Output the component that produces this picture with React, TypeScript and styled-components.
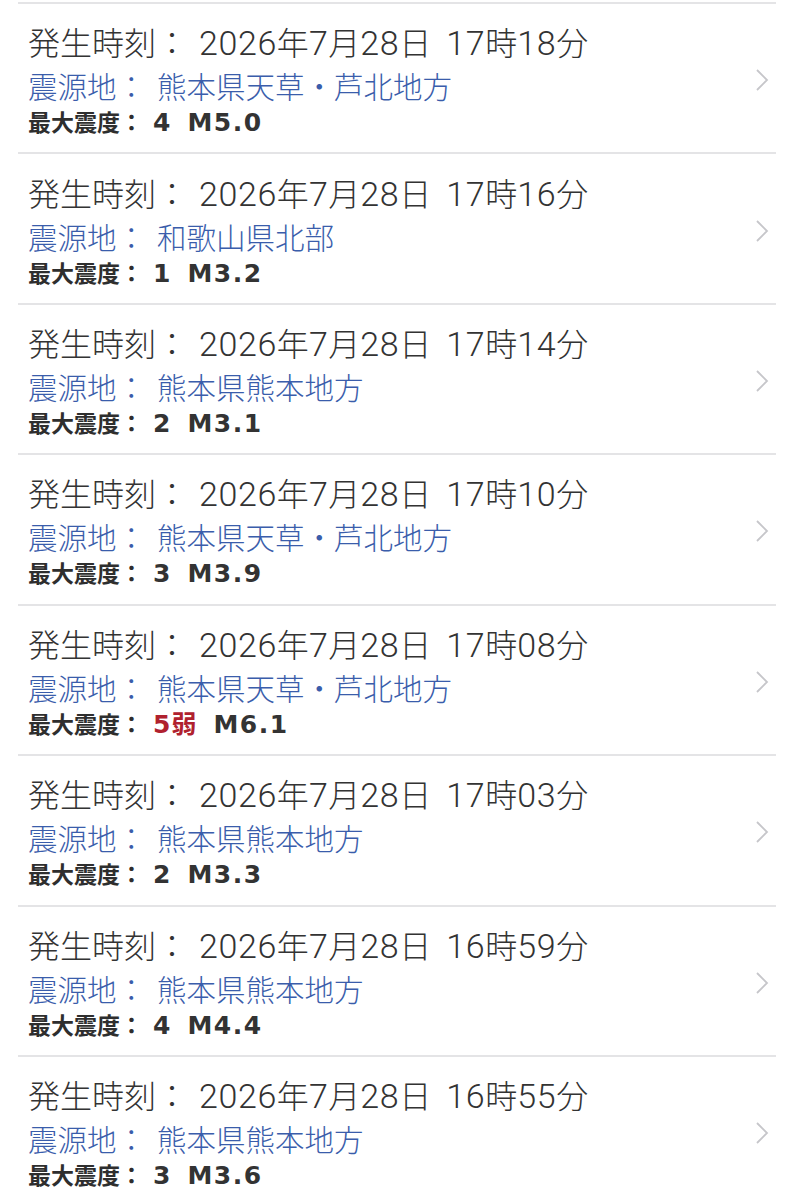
import * as React from 'react'
import styled, { createGlobalStyle } from 'styled-components'

const GlobalStyle = createGlobalStyle`
  html, body {
    margin: 0;
    padding: 0;
    background: #fff;
    overflow: hidden;
  }
  body {
    font-family: 'Noto Sans CJK JP', 'Noto Sans', sans-serif;
    color: #333;
  }
`

const List = styled.div`
  padding: 2px 20px 0 18px;
`

const Row = styled.div`
  display: flex;
  align-items: center;
  box-sizing: border-box;
  height: 150.43px;
  border-top: 2px solid #e4e4e6;
`

const Body = styled.div`
  flex: 1;
  display: flex;
  flex-direction: column;
  padding-left: 10px;
  padding-top: 2px;
`

const Line = styled.div<{ $size: number; $height: number; $color: string }>`
  display: flex;
  align-items: baseline;
  font-size: ${({ $size }) => $size}px;
  line-height: ${({ $height }) => $height}px;
  color: ${({ $color }) => $color};
  font-weight: 300;
  white-space: nowrap;
`

const Label = styled.span<{ $gap: number }>`
  margin-right: ${({ $gap }) => $gap}px;
`

const BoldLabel = styled.span`
  font-size: 23px;
  font-weight: 700;
  color: #2e2e2e;
  margin-right: 10px;
`

// wider Latin digits next to the CJK text, as on the device
const Num = styled.span`
  font-family: Roboto, 'Noto Sans', sans-serif;
  font-size: 34px;
  font-weight: 300;
  letter-spacing: 0.6px;
`

const Gap = styled.span`
  display: inline-block;
  width: 15px;
`

const Shindo = styled.span<{ $alert?: boolean }>`
  font-family: 'DejaVu Sans', 'Noto Sans CJK JP', sans-serif;
  font-size: 25px;
  font-weight: 700;
  letter-spacing: 1px;
  color: ${({ $alert }) => ($alert ? '#b0212e' : '#333')};
`

const Mag = styled.span`
  font-family: 'DejaVu Sans', sans-serif;
  font-size: 25px;
  font-weight: 700;
  letter-spacing: 1.5px;
  color: #333;
  margin-left: 16px;
`

const Chevron = styled.svg`
  width: 14px;
  height: 24px;
  margin-right: 7px;
  margin-top: 4px;
  flex-shrink: 0;
`

type Quake = {
  time: string
  place: string
  shindo: string
  mag: string
}

const quakes: Quake[] = [
  { time: '2026年7月28日 17時18分', place: '熊本県天草・芦北地方', shindo: '4', mag: 'M5.0' },
  { time: '2026年7月28日 17時16分', place: '和歌山県北部', shindo: '1', mag: 'M3.2' },
  { time: '2026年7月28日 17時14分', place: '熊本県熊本地方', shindo: '2', mag: 'M3.1' },
  { time: '2026年7月28日 17時10分', place: '熊本県天草・芦北地方', shindo: '3', mag: 'M3.9' },
  { time: '2026年7月28日 17時08分', place: '熊本県天草・芦北地方', shindo: '5弱', mag: 'M6.1' },
  { time: '2026年7月28日 17時03分', place: '熊本県熊本地方', shindo: '2', mag: 'M3.3' },
  { time: '2026年7月28日 16時59分', place: '熊本県熊本地方', shindo: '4', mag: 'M4.4' },
  { time: '2026年7月28日 16時55分', place: '熊本県熊本地方', shindo: '3', mag: 'M3.6' },
]

const TimeText = ({ text }: { text: string }) => (
  <span>
    {text.split(/(\d+| )/).map((part, i) => {
      if (part === ' ') return <Gap key={i} />
      if (/^\d+$/.test(part)) return <Num key={i}>{part}</Num>
      return part ? <span key={i}>{part}</span> : null
    })}
  </span>
)

const QuakeRow = ({ q }: { q: Quake }) => (
  <Row>
    <Body>
      <Line $size={32} $height={40} $color="#333">
        <Label $gap={11}>発生時刻：</Label>
        <TimeText text={q.time} />
      </Line>
      <Line $size={29.5} $height={44} $color="#3a5dab">
        <Label $gap={11}>震源地：</Label>
        <span>{q.place}</span>
      </Line>
      <Line $size={23} $height={28} $color="#333">
        <BoldLabel>最大震度：</BoldLabel>
        <Shindo $alert={q.shindo.includes('弱') || q.shindo.includes('強')}>{q.shindo}</Shindo>
        <Mag>{q.mag}</Mag>
      </Line>
    </Body>
    <Chevron viewBox="0 0 14 24">
      <path d="M2 2 L12 12 L2 22" fill="none" stroke="#c6c6ca" strokeWidth="1.8" />
    </Chevron>
  </Row>
)

export default function App() {
  return (
    <>
      <GlobalStyle />
      <List>
        {quakes.map((q, i) => (
          <QuakeRow key={i} q={q} />
        ))}
      </List>
    </>
  )
}
